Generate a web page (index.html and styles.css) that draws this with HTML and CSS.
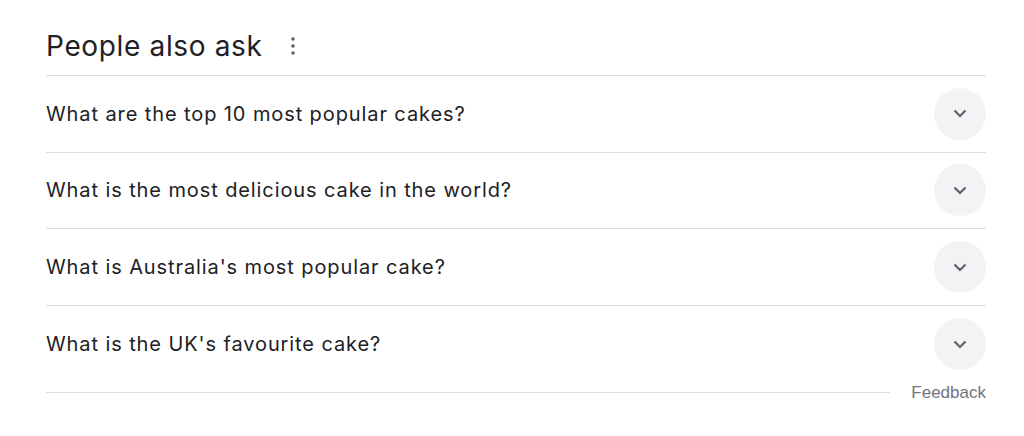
FILE: index.html
```html
<!DOCTYPE html>
<html>
<head>
<meta charset="utf-8">
<link rel="stylesheet" href="styles.css">
</head>
<body>
<div class="paa">
  <div class="head">
    <h2 class="title">People also ask</h2>
    <span class="more" aria-label="More options">
      <svg width="4" height="18" viewBox="0 0 4 18"><circle cx="2" cy="2" r="1.8"/><circle cx="2" cy="9" r="1.8"/><circle cx="2" cy="16" r="1.8"/></svg>
    </span>
  </div>
  <div class="list">
    <div class="row"><span class="q">What are the top 10 most popular cakes?</span><span class="btn"><svg width="14" height="9" viewBox="0 0 14 9"><path d="M1.5 1.5 L7 7 L12.5 1.5" fill="none" stroke="#5f6368" stroke-width="2.2"/></svg></span></div>
    <div class="row"><span class="q">What is the most delicious cake in the world?</span><span class="btn"><svg width="14" height="9" viewBox="0 0 14 9"><path d="M1.5 1.5 L7 7 L12.5 1.5" fill="none" stroke="#5f6368" stroke-width="2.2"/></svg></span></div>
    <div class="row"><span class="q">What is Australia's most popular cake?</span><span class="btn"><svg width="14" height="9" viewBox="0 0 14 9"><path d="M1.5 1.5 L7 7 L12.5 1.5" fill="none" stroke="#5f6368" stroke-width="2.2"/></svg></span></div>
    <div class="row"><span class="q">What is the UK's favourite cake?</span><span class="btn"><svg width="14" height="9" viewBox="0 0 14 9"><path d="M1.5 1.5 L7 7 L12.5 1.5" fill="none" stroke="#5f6368" stroke-width="2.2"/></svg></span></div>
  </div>
  <div class="foot">
    <div class="rule"></div>
    <span class="feedback">Feedback</span>
  </div>
</div>
</body>
</html>
```

FILE: styles.css
```css
html, body {
  margin: 0;
  padding: 0;
  background: #fff;
}
body {
  font-family: Inter, "Liberation Sans", Arial, sans-serif;
  color: #202124;
}
.paa {
  width: 940px;
  margin-left: 46px;
  padding-top: 24px;
}
.head {
  display: flex;
  align-items: center;
  height: 43px;
  border-bottom: 1px solid #dadce0;
  padding-bottom: 8px;
}
.title {
  margin: 0;
  font-weight: 400;
  font-size: 28px;
  line-height: 36px;
  letter-spacing: 0.65px;
  color: #202124;
}
.more {
  display: flex;
  margin-left: 28px;
  fill: #5f6368;
}
.row {
  box-sizing: border-box;
  display: flex;
  align-items: center;
  justify-content: space-between;
  height: 76.67px;
  border-bottom: 1px solid #dadce0;
}
.row:last-child {
  border-bottom: none;
}
.q {
  font-size: 20px;
  line-height: 24px;
  letter-spacing: 0.9px;
  color: #202124;
}
.btn {
  width: 52px;
  height: 52px;
  border-radius: 50%;
  background: #f1f3f4;
  display: flex;
  align-items: center;
  justify-content: center;
}
.foot {
  display: flex;
  align-items: center;
  gap: 21px;
}
.rule {
  flex: 1;
  border-top: 1px solid #dadce0;
}
.feedback {
  font-family: "Liberation Sans", Arial, sans-serif;
  font-size: 17px;
  line-height: 20px;
  color: #70757a;
}
```
